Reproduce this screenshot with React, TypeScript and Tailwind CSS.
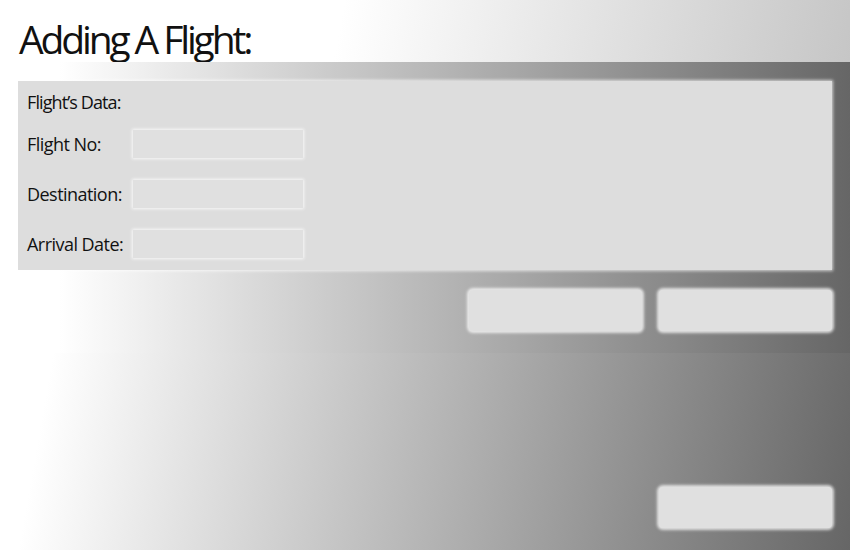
import { useState } from 'react';

// Fields shown in the flight form
const fields = [
  { id: 'flightNo', label: 'Flight No:' },
  { id: 'destination', label: 'Destination:' },
  { id: 'arrivalDate', label: 'Arrival Date:' },
];

function GlowButton() {
  return (
    <button
      type="button"
      className="w-[173px] h-[41px] rounded-[4px] bg-[#e0e0e0] shadow-[0_0_3px_2px_rgba(255,255,255,0.75)]"
    />
  );
}

export default function App() {
  const [values, setValues] = useState<Record<string, string>>({});

  return (
    <div
      className="w-[850px] h-[550px] flex flex-col overflow-hidden bg-white text-[#111]"
      style={{ fontFamily: '"Open Sans", "Noto Sans", sans-serif' }}
    >
      {/* Header */}
      <div className="h-[62px] shrink-0 pl-[19px] flex items-end bg-[linear-gradient(100deg,#ffffff_40%,#c6c6c6_100%)]">
        <h1 className="text-[39px] leading-none tracking-[-0.08em] pb-[4px]">Adding A Flight:</h1>
      </div>

      {/* Form band */}
      <div className="h-[291px] shrink-0 pt-[19px] px-[18px] flex flex-col bg-[linear-gradient(to_right,#ffffff_7%,#666666_100%)]">
        <div className="h-[189px] bg-[#dddddd] pl-[9px] pt-[10px] shadow-[0_0_3px_1px_rgba(255,255,255,0.7)]">
          <p className="text-[18px] leading-[22px] tracking-[-0.05em]">Flight’s Data:</p>
          <div className="mt-[17px] flex flex-col gap-[22px]">
            {fields.map((field) => (
              <div key={field.id} className="flex items-center h-[28px]">
                <label htmlFor={field.id} className="w-[106px] text-[18px] tracking-[-0.03em]">
                  {field.label}
                </label>
                <input
                  id={field.id}
                  value={values[field.id] ?? ''}
                  onChange={(e) => setValues({ ...values, [field.id]: e.target.value })}
                  className="w-[170px] h-[28px] bg-[#e0e0e0] outline-none shadow-[0_0_3px_1px_rgba(255,255,255,0.8)]"
                />
              </div>
            ))}
          </div>
        </div>
        <div className="mt-[20px] flex justify-end gap-[17px]">
          <GlowButton />
          <GlowButton />
        </div>
      </div>

      {/* Bottom area */}
      <div className="flex-1 flex items-end justify-end pr-[18px] pb-[22px] bg-[linear-gradient(100deg,#ffffff_6%,#666666_100%)]">
        <GlowButton />
      </div>
    </div>
  );
}
